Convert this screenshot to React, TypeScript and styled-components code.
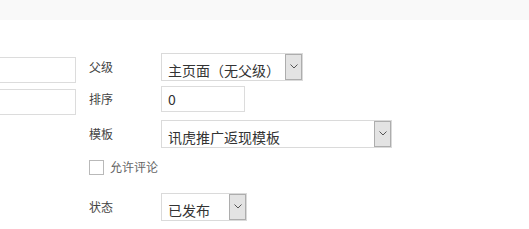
import styled, { createGlobalStyle } from "styled-components";

const GlobalStyle = createGlobalStyle`
  html, body {
    margin: 0;
    padding: 0;
    background: #fff;
  }
  body {
    font-family: "Noto Sans CJK SC", "Noto Sans", "Liberation Sans", sans-serif;
    color: #333;
    overflow: hidden;
  }
`

const TopBar = styled.div`
  height: 20px;
  background-color: #f9f9f9;
`

const Form = styled.div`
  display: flex;
  flex-direction: row;
  align-items: flex-start;
  padding-top: 33px;
`

const LeftColumn = styled.div`
  display: flex;
  flex-direction: column;
  gap: 6px;
  width: 76px;
  padding-top: 4px;
`

const CutInput = styled.div`
  height: 26px;
  box-sizing: border-box;
  border: 1px solid #dcdcdc;
  border-left: none;
  background: #fff;
`

const RightColumn = styled.div`
  display: flex;
  flex-direction: column;
  margin-left: 13px;
`

const Row = styled.div<{ $mt?: number }>`
  display: flex;
  flex-direction: row;
  align-items: center;
  margin-top: ${(p) => p.$mt ?? 0}px;
`

const Label = styled.div`
  width: 72px;
  font-size: 12px;
  line-height: 16px;
  color: #444;
`

const TextInput = styled.div<{ $w: number }>`
  width: ${(p) => p.$w}px;
  height: 26px;
  box-sizing: border-box;
  border: 1px solid #dcdcdc;
  padding-left: 6px;
  font-size: 14px;
  line-height: 24px;
  color: #333;
`

const Select = styled.div<{ $w: number }>`
  width: ${(p) => p.$w}px;
  height: 28px;
  box-sizing: border-box;
  border: 1px solid #dadada;
  display: flex;
  flex-direction: row;
  background: #fff;
`

const SelectValue = styled.span`
  flex: 1;
  padding-left: 6px;
  padding-top: 6px;
  font-size: 14px;
  line-height: 20px;
  color: #333;
  white-space: nowrap;
  overflow: hidden;
`

const ArrowBox = styled.span`
  width: 17px;
  box-sizing: border-box;
  border: 1px solid #adadad;
  background: #e3e3e3;
  display: flex;
  align-items: flex-start;
  justify-content: center;
  padding-top: 9px;
`

const CheckRow = styled.label`
  display: flex;
  flex-direction: row;
  align-items: center;
  gap: 6px;
  font-size: 12px;
  line-height: 16px;
  color: #666;
`

const CheckBox = styled.span`
  width: 15px;
  height: 15px;
  box-sizing: border-box;
  border: 1px solid #b9b9b9;
  background: #fff;
`

const Chevron = () => (
  <svg width="8" height="5" viewBox="0 0 8 5">
    <path d="M0.5 0.5 L4 4 L7.5 0.5" fill="none" stroke="#555" strokeWidth="1" />
  </svg>
)

const Dropdown = ({ width, value }: { width: number; value: string }) => (
  <Select $w={width}>
    <SelectValue>{value}</SelectValue>
    <ArrowBox>
      <Chevron />
    </ArrowBox>
  </Select>
)

export default function App() {
  return (
    <>
      <GlobalStyle />
      <TopBar />
      <Form>
        <LeftColumn>
          <CutInput />
          <CutInput />
        </LeftColumn>
        <RightColumn>
          <Row>
            <Label>父级</Label>
            <Dropdown width={142} value="主页面（无父级）" />
          </Row>
          <Row $mt={5}>
            <Label>排序</Label>
            <TextInput $w={84}>0</TextInput>
          </Row>
          <Row $mt={8}>
            <Label>模板</Label>
            <Dropdown width={231} value="讯虎推广返现模板" />
          </Row>
          <Row $mt={11}>
            <CheckRow>
              <CheckBox />
              允许评论
            </CheckRow>
          </Row>
          <Row $mt={18}>
            <Label>状态</Label>
            <Dropdown width={86} value="已发布" />
          </Row>
        </RightColumn>
      </Form>
    </>
  )
}
